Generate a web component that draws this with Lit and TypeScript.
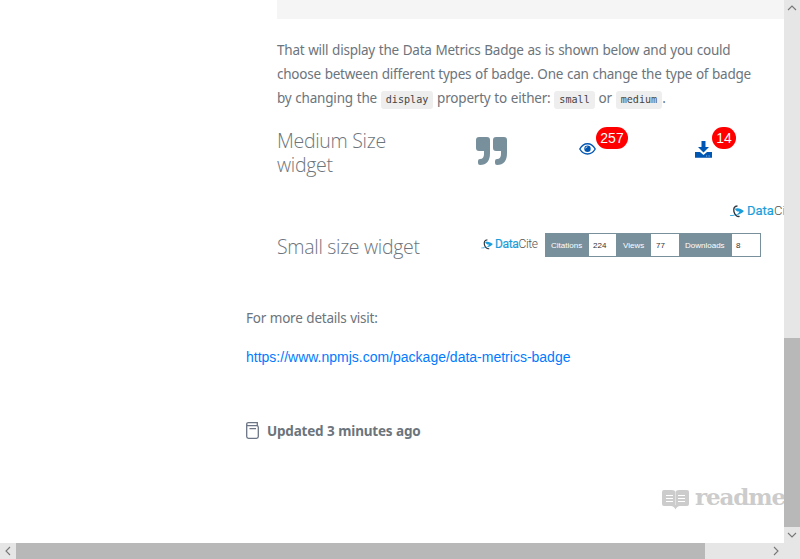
import { LitElement, html, css, svg } from "lit";
import { customElement, property } from "lit/decorators.js";

@customElement("datacite-logo")
class DataciteLogo extends LitElement {
  @property({ reflect: true }) size = "small";
  static styles = css`
    :host { display: inline-flex; align-items: center; height: 14px; white-space: nowrap; flex: none; }
    .mark { width: 12px; height: 11px; flex: none; }
    .name { font: 12px/14px Roboto, sans-serif; color: #555; letter-spacing: -0.35px; margin-left: 2px; width: 42px; }
    .data { color: #1a9ddb; font-weight: 400; -webkit-text-stroke: 0.2px #1a9ddb; }
    .cite { font-weight: 300; }
    :host([size="large"]) .mark { width: 14px; height: 13px; }
    :host([size="large"]) .name { font-size: 13px; letter-spacing: 0; width: 50px; margin-left: 3px; }
  `;
  render() {
    return html`
      <svg class="mark" viewBox="0 0 15 14">
        <path d="M0 11C4 11 6 10.500 8 9.500C7 10.800 3 12.300 0 11.800Z" fill="#1a9ddb" />
        <path d="M5 4C8 2.600 12 3.600 15 6.500C12.500 9.200 9.500 10.600 6.500 10.800C8.600 9.500 9.600 8.500 10 7C8 7.200 6.500 6.500 5 4Z" fill="#1a9ddb" />
        <path d="M8 1C4.600 1 3.400 4 4.200 7.200C5 10.500 7.500 13 10.300 12.300" fill="none" stroke="#2b3640" stroke-width="1.500" />
      </svg>
      <span class="name"><span class="data">Data</span><span class="cite">Cite</span></span>
    `;
  }
}

@customElement("scroll-bar")
class ScrollBar extends LitElement {
  @property({ reflect: true }) direction = "vertical";
  static styles = css`
    :host { display: flex; background: #e6e6e6; }
    :host([direction="vertical"]) { flex-direction: column; }
    svg { width: 16px; height: 16px; flex: none; fill: none; stroke: #777; stroke-width: 1.1; }
    .thumb { background: #b8b8b8; flex: none; }
    .track { flex: 1; }
    :host([direction="vertical"]) .thumb { height: 189px; margin-top: 322px; }
    :host([direction="horizontal"]) .thumb { width: 689px; }
  `;
  render() {
    const vertical = this.direction === "vertical";
    const start = vertical ? "M4 10L8 6L12 10" : "M10 4L6 8L10 12";
    const end = vertical ? "M4 6L8 10L12 6" : "M6 4L10 8L6 12";
    return html`
      <svg viewBox="0 0 16 16">${svg`<path d=${start} />`}</svg>
      <div class="thumb"></div>
      <div class="track"></div>
      <svg viewBox="0 0 16 16">${svg`<path d=${end} />`}</svg>
    `;
  }
}

@customElement("app-root")
class AppRoot extends LitElement {
  static styles = css`
    :host {
      display: grid; grid-template: 543px 16px / 784px 16px; width: 800px; height: 559px;
      overflow: hidden; background: #fff; color: #6c747c;
      font-family: "Noto Sans", "Open Sans", sans-serif;
    }
    .corner { background: #e6e6e6; }
    .page { overflow: hidden; padding-left: 246px; white-space: nowrap; }
    .doc { margin-left: 31px; }
    .code-block { height: 19px; background: #f5f5f5; }
    .para { margin: 19px 0 0; font-size: 13.5px; line-height: 24px; letter-spacing: -0.23px; word-spacing: 0.5px; }
    .line { display: block; height: 24px; }
    .line:last-child { letter-spacing: -0.2px; }
    code {
      font: 10.1px/18px "DejaVu Sans Mono", monospace; letter-spacing: 0; color: #444; background: #eee;
      border-radius: 3px; padding: 3px 5px 4px;
    }
    .row { display: flex; }
    .medium { height: 103px; margin-top: 16px; }
    .small { height: 24px; }
    h3 { font: 300 19.5px/24px "Open Sans", sans-serif; letter-spacing: -0.3px; margin: 3px 0 0; width: 199px; flex: none; color: #6c747c; }
    .small h3 { width: 204px; margin-top: 2px; }
    .small datacite-logo { margin-top: 4px; }
    .quote { width: 32px; height: 28px; margin-top: 11px; flex: none; }
    .metric { display: flex; flex: none; }
    .views { margin-left: 71px; }
    .downloads { margin-left: 67px; }
    .eye { width: 17px; height: 14px; margin-top: 16px; }
    .down { width: 17px; height: 17px; margin-top: 15px; }
    .pill { height: 22px; border-radius: 11px; background: #f00; color: #fff; font: 14px/22px "Liberation Sans", sans-serif; text-align: center; margin-top: 1px; }
    .views .pill { width: 32px; }
    .downloads .pill { width: 24px; }
    .medium-logo { display: flex; height: 29px; margin: -25px 0 0 453px; }
    .badge { display: flex; box-sizing: border-box; border: 1px solid #78909c; width: 216px; height: 24px; margin-left: 8px; font: 8px/23px "Liberation Sans", sans-serif; }
    .label { background: #78909c; color: #fff; flex: none; box-sizing: border-box; padding-left: 5px; height: 22px; }
    .value { color: #333; padding-left: 4px; box-sizing: border-box; flex: none; }
    .citations { width: 43px; }
    .citations-n { width: 27px; }
    .views-l { width: 35px; padding-left: 7px; }
    .views-n { width: 28px; padding-left: 5px; }
    .downloads-l { width: 53px; padding-left: 6px; }
    .more { margin: 49px 0 0; font-size: 13.5px; line-height: 24px; letter-spacing: -0.24px; word-spacing: 0.5px; }
    .link { display: block; margin-top: 15px; font: 14px/24px "Liberation Sans", sans-serif; color: #007bff; text-decoration: none; }
    .updated { display: flex; align-items: center; height: 24px; margin-top: 50px; font-size: 13.5px; font-weight: 700; letter-spacing: -0.2px; word-spacing: 0.4px; }
    .book { width: 13px; height: 17px; margin: -2px 8px 0 0; }
    .brand { display: flex; margin: 42px 0 0 416px; color: #ccc; height: 30px; }
    .open-book { width: 27px; height: 20px; margin-top: 5px; flex: none; }
    .word { font: bold 23px/24px "DejaVu Serif", serif; margin-left: 6px; letter-spacing: -1.1px; }
  `;
  render() {
    return html`
      <main class="page">
        <div class="doc">
          <div class="code-block"></div>
          <p class="para">
            <span class="line">That will display the Data Metrics Badge as is shown below and you could</span>
            <span class="line">choose between different types of badge. One can change the type of badge</span>
            <span class="line">by changing the <code>display</code> property to either: <code>small</code> or <code>medium</code>.</span>
          </p>
          <div class="row medium">
            <h3>Medium Size<br />widget</h3>
            <svg class="quote" viewBox="0 0 32 28" fill="#78909c">
              <path d="M3 0H11Q14 0 14 3V16Q14 28 4 28Q2 28 2 26V24Q2 22 4 22Q8 22 8 17V14H3Q0 14 0 11V3Q0 0 3 0Z" />
              <path d="M20 0H28Q31 0 31 3V16Q31 28 21 28Q19 28 19 26V24Q19 22 21 22Q25 22 25 17V14H20Q17 14 17 11V3Q17 0 20 0Z" />
            </svg>
            <div class="metric views">
              <svg class="eye" viewBox="0 0 17 14">
                <path d="M.8 7C4.600-.1 12.400-.1 16.200 7C12.400 13.600 4.600 13.600 .8 7Z" fill="none" stroke="#0056b3" stroke-width="1.400" />
                <circle cx="8.500" cy="6.800" r="3.200" fill="#0056b3" />
                <path d="M6.600 6.400Q6.700 4.900 8.400 4.800" fill="none" stroke="#fff" stroke-width=".8" />
              </svg>
              <span class="pill">257</span>
            </div>
            <div class="metric downloads">
              <svg class="down" viewBox="0 0 17 17" fill="#0056b3">
                <path d="M6.500 0H10.500V6H14L8.500 11.500L3 6H6.500Z" />
                <path d="M0 11H5L8.500 14L12 11H17V16.800H0Z" />
                <path d="M11 14.500H12.200V15.500H11ZM13.500 14.500H14.700V15.500H13.500Z" fill="#8db8e0" />
              </svg>
              <span class="pill">14</span>
            </div>
          </div>
          <div class="medium-logo"><datacite-logo size="large"></datacite-logo></div>
          <div class="row small">
            <h3>Small size widget</h3>
            <datacite-logo></datacite-logo>
            <div class="badge">
              <span class="label citations">Citations</span><span class="value citations-n">224</span>
              <span class="label views-l">Views</span><span class="value views-n">77</span>
              <span class="label downloads-l">Downloads</span><span class="value">8</span>
            </div>
          </div>
        </div>
        <p class="more">For more details visit:</p>
        <a class="link">https://www.npmjs.com/package/data-metrics-badge</a>
        <div class="updated">
          <svg class="book" viewBox="0 0 13 17" fill="none" stroke="#6b7585" stroke-width="1.300">
            <path d="M.7 2.500V14.500Q.7 16.300 2.500 16.300H10.500Q12.300 16.300 12.300 14.500V5.200Q12.300 3.700 10.500 3.700H2.500Q.7 3.700 .7 2.200Q.7 .7 2.500 .7H11.300V3.500M3.500 6.700H10" />
          </svg>
          <span>Updated 3 minutes ago</span>
        </div>
        <div class="brand">
          <svg class="open-book" viewBox="0 0 27 20">
            <path d="M2 0H10Q13 0 13.500 2Q14 0 17 0H25Q27 0 27 2V14Q27 16 25 16H18Q15 16 13.500 19.500Q12 16 9 16H2Q0 16 0 14V2Q0 0 2 0Z" fill="#ccc" />
            <path d="M4 5.500H11M4 8.500H11M4 11.500H11M16 5.500H23M16 8.500H23M16 11.500H23" fill="none" stroke="#fff" stroke-width="1" />
            <path d="M13.500 2V15" stroke="#e4e4e4" stroke-width=".8" />
          </svg>
          <span class="word">readme</span>
        </div>
      </main>
      <scroll-bar direction="vertical"></scroll-bar>
      <scroll-bar direction="horizontal"></scroll-bar>
      <div class="corner"></div>
    `;
  }
}
